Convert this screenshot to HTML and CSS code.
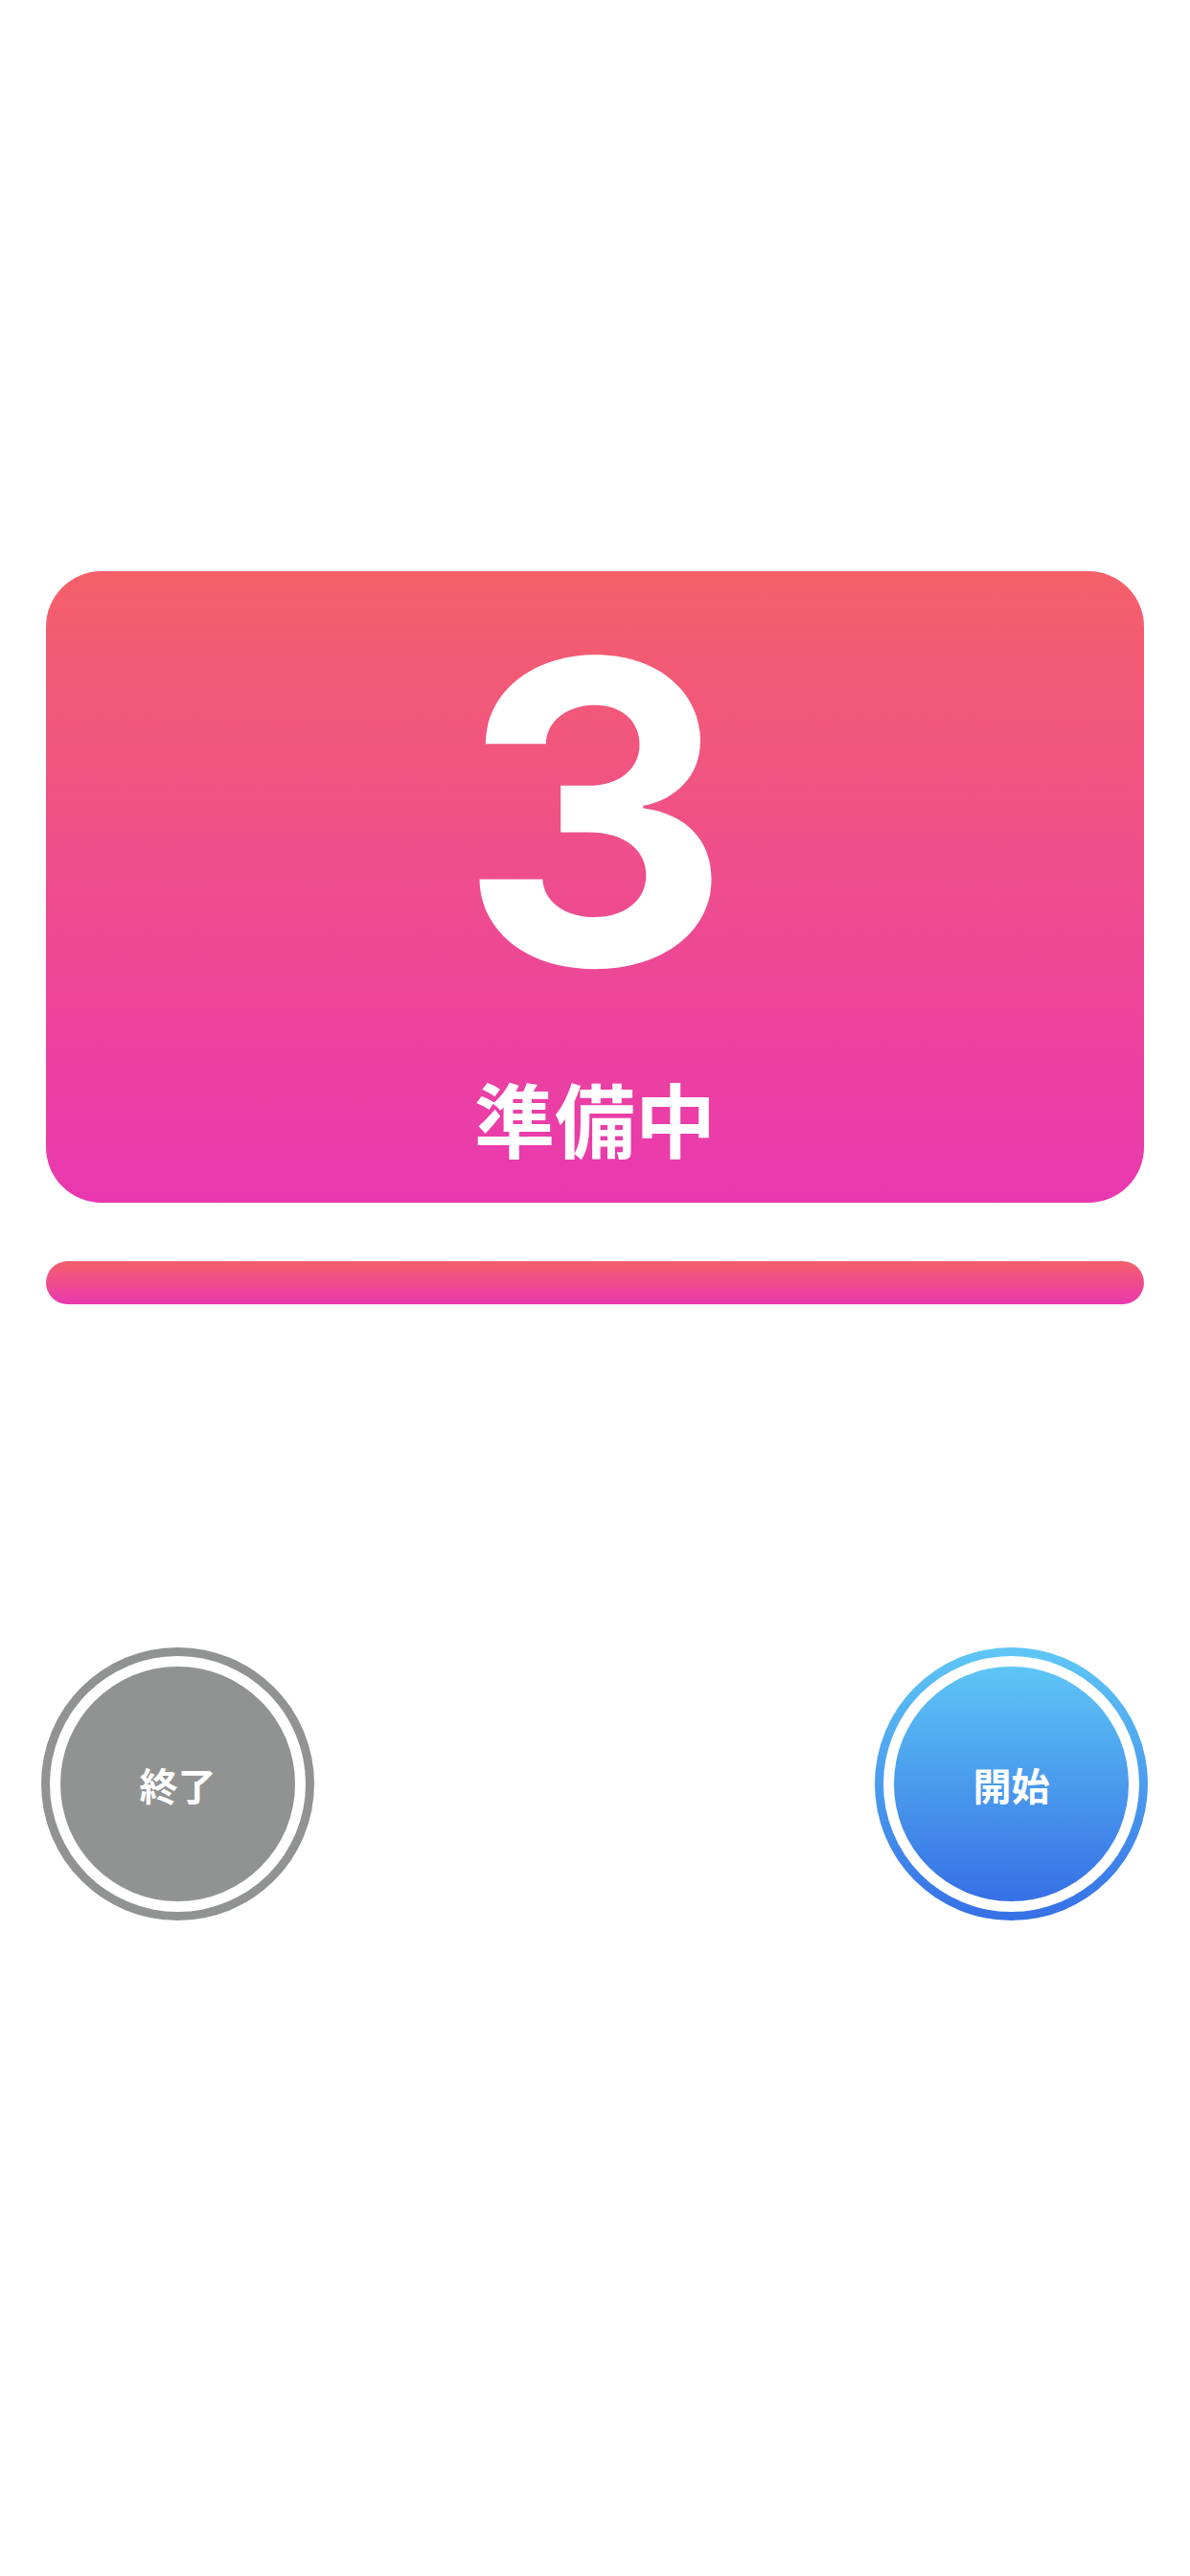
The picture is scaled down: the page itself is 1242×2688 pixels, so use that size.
FILE: index.html
```html
<!DOCTYPE html>
<html lang="ja">
<head>
<meta charset="utf-8">
<title>Timer</title>
<link rel="stylesheet" href="styles.css">
</head>
<body>
<main class="screen">
  <section class="card">
    <div class="count">3</div>
    <div class="status">準備中</div>
  </section>
  <div class="progress"></div>
  <div class="controls">
    <button class="btn btn-stop">
      <span class="ring"><span class="face">終了</span></span>
    </button>
    <button class="btn btn-start">
      <span class="ring"><span class="face">開始</span></span>
    </button>
  </div>
</main>
</body>
</html>
```

FILE: styles.css
```css
html, body {
  margin: 0;
  padding: 0;
  background: #ffffff;
}
body {
  width: 1242px;
  height: 2688px;
  overflow: hidden;
  font-family: "Noto Sans CJK JP", "Noto Sans", sans-serif;
}
.screen {
  display: flex;
  flex-direction: column;
  padding-top: 596px;
}
.card {
  margin: 0 48px;
  height: 659px;
  border-radius: 58px;
  background: linear-gradient(180deg, #f5606a 0%, #f05383 35%, #e938b0 100%);
  display: flex;
  flex-direction: column;
  align-items: center;
  padding-top: 32px;
  box-sizing: border-box;
  color: #ffffff;
}
.count {
  font-family: Inter, "Liberation Sans", sans-serif;
  font-weight: 700;
  font-size: 439px;
  line-height: 439px;
  height: 439px;
  letter-spacing: 0;
}
.status {
  margin-top: 57px;
  font-family: "Noto Sans CJK JP", sans-serif;
  font-weight: 700;
  font-size: 84px;
  line-height: 84px;
}
.progress {
  margin: 61px 48px 0;
  height: 45px;
  border-radius: 23px;
  background: linear-gradient(180deg, #f5606a 0%, #e938b0 100%);
}
.controls {
  margin-top: 358px;
  display: flex;
  justify-content: space-between;
  padding: 0 44px 0 43px;
}
.btn {
  width: 285px;
  height: 285px;
  border: 0;
  margin: 0;
  padding: 9px;
  border-radius: 50%;
  box-sizing: border-box;
  display: flex;
  cursor: pointer;
}
.ring {
  flex: 1;
  display: flex;
  background: #ffffff;
  border-radius: 50%;
  padding: 11px;
}
.face {
  flex: 1;
  border-radius: 50%;
  display: flex;
  align-items: center;
  justify-content: center;
  color: #ffffff;
  font-family: "Noto Sans CJK JP", sans-serif;
  font-weight: 700;
  font-size: 40px;
  line-height: 1;
}
.btn-stop {
  background: #919392;
}
.btn-stop .face {
  background: #919392;
}
.btn-start {
  background: linear-gradient(180deg, #5ec7f6 0%, #3670e6 100%);
}
.btn-start .face {
  background: linear-gradient(180deg, #5ec5f5 0%, #3670e5 100%);
}
```
